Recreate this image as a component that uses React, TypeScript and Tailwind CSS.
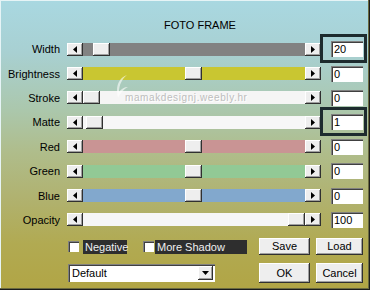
import type { ReactNode } from "react";

// FOTO FRAME フィルターダイアログ(Windows クラシック風)

const raised =
  "bg-[#eeeeee] shadow-[inset_-1px_-1px_#303030,inset_1px_1px_#ffffff,inset_-2px_-2px_#a0a0a0]";
const sunken = "bg-white shadow-[inset_1px_1px_#808080,inset_2px_2px_#404040]";

type Row = {
  label: string;
  track: string;
  thumb: number;
  value: string;
  focus?: boolean;
  watermark?: boolean;
};

const rows: Row[] = [
  { label: "Width", track: "bg-[#828282]", thumb: 10, value: "20", focus: true },
  { label: "Brightness", track: "bg-[#c9c631]", thumb: 102, value: "0" },
  { label: "Stroke", track: "bg-[#f5f5f5]", thumb: 0, value: "0", watermark: true },
  { label: "Matte", track: "bg-[#f7f7f7]", thumb: 3, value: "1", focus: true },
  { label: "Red", track: "bg-[#c99494]", thumb: 102, value: "0" },
  { label: "Green", track: "bg-[#92c995]", thumb: 102, value: "0" },
  { label: "Blue", track: "bg-[#82a8cd]", thumb: 102, value: "0" },
  { label: "Opacity", track: "bg-[#f6f6f6]", thumb: 205, value: "100" },
];

function Arrow({ dir }: { dir: "left" | "right" | "down" }) {
  const pts = dir === "left" ? "4,0 0,3.5 4,7" : dir === "right" ? "0,0 4,3.5 0,7" : "0,0 7,0 3.5,4";
  const size = dir === "down" ? { w: 7, h: 4 } : { w: 4, h: 7 };
  return (
    <svg width={size.w} height={size.h} viewBox={`0 0 ${size.w} ${size.h}`}>
      <polygon points={pts} fill="#000" />
    </svg>
  );
}

function Slider({ row }: { row: Row }) {
  return (
    <div className="flex items-center h-[13px]">
      <div className={`w-[16px] h-[13px] flex items-center justify-center ${raised}`}>
        <Arrow dir="left" />
      </div>
      <div className={`relative w-[222px] h-[13px] ${row.track}`}>
        <div
          className={`absolute top-0 w-[17px] h-[13px] ${raised}`}
          style={{ left: row.thumb }}
        />
      </div>
      <div className={`w-[16px] h-[13px] flex items-center justify-center ${raised}`}>
        <Arrow dir="right" />
      </div>
    </div>
  );
}

function Button({ w, h, children }: { w: string; h: string; children: ReactNode }) {
  return (
    <div className={`${w} ${h} flex items-center justify-center text-black ${raised}`}>
      {children}
    </div>
  );
}

function Check({ label, w, gap }: { label: string; w: string; gap: string }) {
  return (
    <div className="flex items-center">
      <div className={`w-[11px] h-[11px] ${sunken}`} />
      <div className={`${gap} ${w} h-[14px] bg-[#2e2e2e] text-[#f0f0f0] pl-[2px] leading-[14px]`}>
        {label}
      </div>
    </div>
  );
}

export default function App() {
  return (
    <div
      className="w-[370px] h-[290px] overflow-hidden text-[11px] text-black font-['Liberation_Sans',Arial,sans-serif] bg-[linear-gradient(180deg,#a9d8e1_0%,#a8d0d2_18%,#abc7ac_38%,#afbd8c_52%,#b0b270_68%,#b1aa52_84%,#b1a545_100%)] shadow-[inset_-1px_-1px_#1c1c1c,inset_-2px_-2px_#6a6a40,inset_1px_1px_#e6f4f6]"
    >
      <div className="pt-[18px] pl-[30px] h-[32px] text-center leading-[14px]">FOTO FRAME</div>

      <div className="mt-[5px] flex flex-col">
        {rows.map((row) => (
          <div key={row.label} className="relative h-[24.4px] flex items-center">
            <div className="w-[60px] text-right leading-[14px]">{row.label}</div>
            <div className="ml-[7px]">
              <Slider row={row} />
            </div>
            <div className={`ml-[10px] w-[32px] h-[16px] pl-[3px] leading-[16px] ${sunken}`}>
              {row.value}
            </div>
            {row.focus && (
              <div className="absolute left-[320px] top-[-3.5px] w-[47px] h-[29px] border-[3px] border-[#1d2b2e]" />
            )}
            {row.watermark && (
              <>
                <svg
                  width="16"
                  height="26"
                  viewBox="0 0 16 26"
                  className="absolute left-[113px] top-[-12px] opacity-60 pointer-events-none"
                >
                  <path d="M14 1 C6 4 2 12 5 24 C7 19 11 15 15 13 C11 13 8 15 6 18 C6 11 9 5 14 1 Z" fill="#ffffff" />
                </svg>
                <span className="absolute left-[125px] top-0 h-full flex items-center text-[10px] tracking-[0.6px] text-[#bdbdbd] [text-shadow:1px_1px_0_#ffffff] pointer-events-none">
                  mamakdesignj.weebly.hr
                </span>
              </>
            )}
          </div>
        ))}
      </div>

      <div className="mt-[6px] pl-[68px] h-[17px] flex items-center">
        <Check label="Negative" w="w-[44px]" gap="ml-[4px]" />
        <div className="ml-[16px]">
          <Check label="More Shadow" w="w-[92px]" gap="ml-[1px]" />
        </div>
        <div className="ml-[12px]">
          <Button w="w-[51px]" h="h-[17px]">Save</Button>
        </div>
        <div className="ml-[6px]">
          <Button w="w-[47px]" h="h-[17px]">Load</Button>
        </div>
      </div>

      <div className="mt-[8px] pl-[68px] h-[20px] flex items-center">
        <div className={`w-[147px] h-[18px] flex items-center ${sunken}`}>
          <span className="flex-1 pl-[4px] leading-[16px]">Default</span>
          <div className={`mr-[2px] w-[15px] h-[14px] flex items-center justify-center ${raised}`}>
            <Arrow dir="down" />
          </div>
        </div>
        <div className="ml-[44px]">
          <Button w="w-[51px]" h="h-[20px]">OK</Button>
        </div>
        <div className="ml-[6px]">
          <Button w="w-[47px]" h="h-[20px]">Cancel</Button>
        </div>
      </div>
    </div>
  );
}
